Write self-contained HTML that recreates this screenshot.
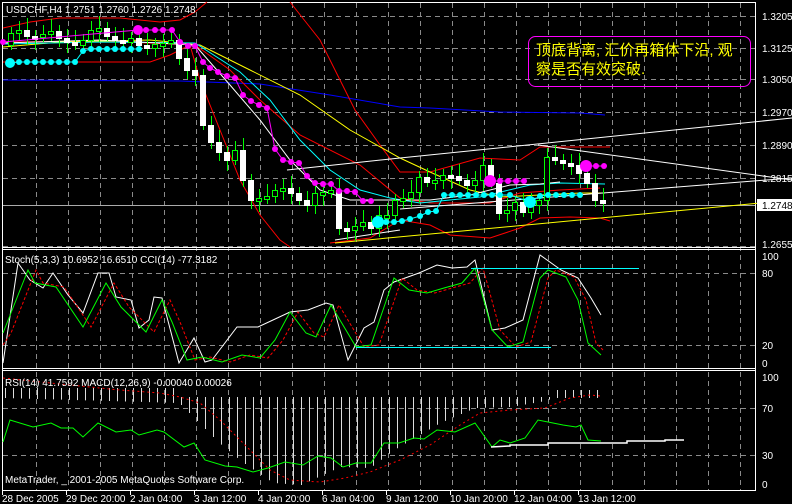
<!DOCTYPE html>
<html><head><meta charset="utf-8"><style>
html,body{margin:0;padding:0;background:#000;width:792px;height:504px;overflow:hidden}
svg{display:block}
text{font-family:"Liberation Sans","Noto Sans CJK SC",sans-serif;font-size:10px;fill:#fff}
</style></head><body>
<svg id="s" width="792" height="504" viewBox="0 0 792 504" xmlns="http://www.w3.org/2000/svg">
<g id="grid" stroke="#8a8a8a" stroke-dasharray="5,4" stroke-width="1"></g>
<g fill="none" stroke="#fff" stroke-width="1">
<line x1="2" y1="2.5" x2="756" y2="2.5"/>
<line x1="2.5" y1="2" x2="2.5" y2="491"/>
<line x1="755.5" y1="2" x2="755.5" y2="491"/>
<line x1="2" y1="247.5" x2="756" y2="247.5"/><line x1="2" y1="249.5" x2="756" y2="249.5"/>
<line x1="2" y1="368.5" x2="756" y2="368.5"/><line x1="2" y1="370.5" x2="756" y2="370.5"/>
<line x1="2" y1="490.5" x2="756" y2="490.5"/>
</g>
<line x1="3" y1="205.5" x2="755" y2="205.5" stroke="#aaa"/>
<g fill="none" stroke-width="1">
<polyline stroke="#0000ff" points="3,80 180,81 260,84 330,95 400,107 430,108 500,112 580,113 605,115"/>
<polyline stroke="#ff0000" points="3,28 30,22 60,18 120,18 160,22 180,20 195,12 207,2"/>
<polyline stroke="#ff0000" points="290,2 320,40 340,80 355,110 380,145 400,172 430,172 480,158 520,160 540,147 560,147 610,147"/>
<polyline stroke="#ff0000" points="3,62 50,62 100,62 150,62 170,55 190,45 200,80 220,130 240,180 260,215 280,240 290,247"/>
<polyline stroke="#ff0000" points="330,243 370,238 400,220 430,225 450,235 490,238 520,228 540,218 570,217 600,218 610,221"/>
<polyline stroke="#ff0000" points="3,42 100,41 195,45 230,70 260,100 300,135 360,165 400,198 430,203 460,203 490,203 520,193 560,190 600,188"/>
<polyline stroke="#ffff00" points="3,47 60,42 150,40 200,45 250,70 300,95 350,130 400,158 430,172 470,190 500,197 540,195 580,193 605,193"/>
<polyline stroke="#00ffff" points="3,44 100,42 195,43 240,72 270,100 300,140 330,170 360,190 390,198 420,203 450,200 480,197 530,185 560,183 605,184"/>
<polyline stroke="#ffffff" points="3,43 100,40 195,45 230,85 260,120 290,160 320,190 350,200 390,200 430,200 470,195 510,185 540,184 560,182"/>
<line stroke="#fff" x1="287" y1="170" x2="400" y2="158"/>
<line stroke="#fff" x1="400" y1="158" x2="792" y2="118"/>
<line stroke="#fff" x1="538" y1="145" x2="792" y2="180"/>
<line stroke="#fff" x1="335" y1="240" x2="400" y2="230"/>
<line stroke="#fff" x1="400" y1="209" x2="792" y2="178"/>
<line stroke="#ffff00" x1="335" y1="243" x2="792" y2="200"/>
</g>
<g id="candles"></g>
<g id="dots"></g>
<rect x="528.5" y="36.5" width="222" height="50" rx="7" fill="none" stroke="#ff00ff"/>
<text x="536" y="55" style="font-size:15px;fill:#ffff00">顶底背离, 汇价再箱体下沿, 观</text>
<text x="536" y="74" style="font-size:15px;fill:#ffff00">察是否有效突破.</text>
<text x="6" y="13">USDCHF,H4  1.2751 1.2760 1.2726 1.2748</text>
<g>
<text x="762" y="20">1.3205</text><text x="762" y="52">1.3125</text><text x="762" y="83">1.3050</text>
<text x="762" y="116">1.2970</text><text x="762" y="149">1.2890</text><text x="762" y="182">1.2815</text>
<text x="762" y="248">1.2655</text>
<rect x="757" y="199" width="35" height="12" fill="#fff"/>
<text x="762" y="209" style="fill:#000">1.2748</text>
<text x="762" y="260">100</text><text x="762" y="277">80</text><text x="762" y="349">20</text><text x="762" y="367">0</text>
<text x="762" y="381">100</text><text x="762" y="412">70</text><text x="762" y="459">30</text><text x="762" y="488">0</text>
</g>
<g fill="none">
<polyline stroke="#fff" points="3,363 18,263 30,280 43,288 53,273 68,295 83,313 98,273 109,273 116,297 131,300 139,328 149,320 154,297 162,298 179,363 194,338 205,362 212,360 237,327 258,327 273,320 290,312 308,310 326,303 333,305 348,360 364,328 374,322 384,290 394,282 419,273 437,265 452,268 467,267 475,260 492,330 505,328 523,320 540,255 561,270 578,278 591,298 601,315"/>
<polyline stroke="#ff0000" stroke-dasharray="3,2" points="3,345 11,333 36,270 43,283 64,287 91,327 114,283 129,307 154,332 170,300 180,322 195,360 210,357 230,362 250,355 268,358 283,340 298,312 314,333 324,337 339,305 364,347 379,345 402,278 417,290 435,293 452,288 470,283 483,268 500,330 516,347 531,342 548,278 556,270 574,277 586,300 596,343 603,350"/>
<polyline stroke="#00ff00" points="3,333 28,270 35,283 56,287 83,327 106,283 121,307 146,332 162,300 172,322 187,360 202,357 222,362 242,355 260,358 275,340 290,312 306,333 316,337 331,305 356,347 371,345 394,278 409,290 427,293 444,288 462,283 475,268 492,330 508,347 523,342 540,278 548,270 566,277 578,300 588,343 601,355"/>
<line stroke="#00ffff" x1="471" y1="268.5" x2="639" y2="268.5"/>
<line stroke="#00ffff" x1="356" y1="347.5" x2="551" y2="347.5"/>
</g>
<text x="5" y="263">Stoch(5,3,3) 10.6952 16.6510  CCI(14) -77.3182</text>
<g id="macd" stroke="#ddd"></g>
<g fill="none">
<polyline stroke="#ff0000" stroke-dasharray="2,3" points="3,378 60,384 120,390 160,393 180,397 200,403 220,420 245,445 270,470 290,480 320,482 345,478 370,472 400,460 430,445 460,425 480,413 510,410 545,408 570,398 590,395 600,396"/>
<polyline stroke="#00ff00" points="3,442 10,420 33,427 51,423 61,428 73,428 83,437 98,423 116,432 131,430 139,435 157,430 164,432 184,447 194,443 205,460 225,466 237,467 253,472 268,468 285,462 303,465 318,456 331,458 343,467 356,463 371,463 384,443 399,443 414,438 424,439 437,430 455,432 475,423 492,447 500,440 510,443 525,438 538,420 548,422 563,425 576,427 581,425 588,440 601,441"/>
<polyline stroke="#fff" stroke-width="1.5" points="491,447 510,446 510,445 548,445 548,443 627,443 627,441 665,441 665,440 684,440"/>
</g>
<text x="5" y="386">RSI(14) 41.7592  MACD(12,26,9) -0.00040 0.00026</text>
<text x="5" y="483">MetaTrader, _ 2001-2005 MetaQuotes Software Corp.</text>
<g id="time"></g>
</svg>
<script>
var NS="http://www.w3.org/2000/svg";
function el(p,t,a){var e=document.createElementNS(NS,t);for(var k in a)e.setAttribute(k,a[k]);p.appendChild(e);return e;}
var g=document.getElementById('grid');
for(var x=36;x<755;x+=32){el(g,'line',{x1:x+.5,y1:3,x2:x+.5,y2:490});}
[16.5,48.5,79.5,112.5,145.5,178.5,246.5,273.5,345.5,408.5,455.5].forEach(function(y){el(g,'line',{x1:3,y1:y,x2:755,y2:y});});
var closes=[33,30,36,37,34,31,38,42,45,40,30,28,36,40,42,38,45,48,44,43,40,58,70,75,125,142,152,160,150,180,200,198,196,190,188,193,200,205,193,192,190,228,230,226,222,228,215,215,200,198,192,177,182,180,175,176,180,185,180,165,183,213,210,202,212,205,200,157,160,163,165,173,183,200,203];
var cg=document.getElementById('candles');var prev=45;
closes.forEach(function(c,i){var x=11+8*i;var o=prev;var top=Math.min(o,c),bot=Math.max(o,c);if(bot-top<3){bot=top+3;}
var bear=c>o;el(cg,'line',{x1:x+.5,y1:top-6-(i%3)*3,x2:x+.5,y2:bot+5+(i%4)*2,stroke:'#00ff00'});
el(cg,'rect',{x:x-2.5,y:top+.5,width:5,height:bot-top,fill:bear?'#fff':'#000',stroke:bear?'#fff':'#00ff00'});prev=c;});
var dg=document.getElementById('dots');
function dot(x,y,r,c){el(dg,'circle',{cx:x,cy:y,r:r,fill:c});}
function chain(pts,c){el(dg,'polyline',{points:pts.map(function(p){return p.join(',')}).join(' '),fill:'none',stroke:c});pts.forEach(function(p){dot(p[0],p[1],3,c);});}
var m=[[3,42],[138,30],[146,30],[155,30],[163,30],[172,30],[180,42],[188,46],[195,46],[203,62],[210,68],[218,72],[227,76],[235,78],[243,95],[251,101],[259,105],[267,108],[275,149],[283,160],[291,162],[299,163],[307,176],[315,183],[323,184],[331,184],[339,191],[347,191],[355,192],[363,201],[371,201]];
chain(m,'#ff00ff');dot(138,30,5,'#ff00ff');
chain([[490,181],[500,181],[508,181],[516,181],[524,181]],'#ff00ff');dot(490,181,6,'#ff00ff');
chain([[586,166],[596,166],[604,166]],'#ff00ff');dot(586,166,6,'#ff00ff');
var cy=[[10,63]];for(var x=19;x<=75;x+=8)cy.push([x,62]);cy.push([83,51]);for(x=91;x<=139;x+=8)cy.push([x,49]);
chain(cy,'#00ffff');dot(10,63,5,'#00ffff');
var c2=[[378,222],[386,222],[394,222],[402,221],[410,219],[420,216],[428,212],[436,211],[444,195],[452,195],[460,195],[468,195],[476,195],[484,195],[492,195],[500,195],[510,195],[530,202],[540,196],[548,195],[556,195],[564,195],[572,195],[580,195]];
chain(c2,'#00ffff');dot(378,222,6,'#00ffff');dot(530,202,6,'#00ffff');
var mg=document.getElementById('macd');
function depth(x){var pts=[[3,398],[179,403],[219,443],[242,462],[273,483],[301,485],[340,467],[370,468],[394,450],[440,423],[475,408],[510,407],[540,402],[555,398],[600,398]];for(var i=1;i<pts.length;i++){if(x<=pts[i][0]){var a=pts[i-1],b=pts[i];return a[1]+(b[1]-a[1])*(x-a[0])/(b[0]-a[0]);}}return 398;}
for(var x=5;x<=600;x+=8){var t=x<180?388:(x>550?390:397);el(mg,'line',{x1:x+.5,y1:t,x2:x+.5,y2:depth(x)});}
var tg=document.getElementById('time');
[["28 Dec 2005",2],["29 Dec 20:00",66],["2 Jan 04:00",130],["3 Jan 12:00",194],["4 Jan 20:00",258],["6 Jan 04:00",322],["9 Jan 12:00",386],["10 Jan 20:00",450],["12 Jan 04:00",514],["13 Jan 12:00",578]].forEach(function(a){var t=el(tg,'text',{x:a[1],y:502});t.textContent=a[0];el(tg,'line',{x1:a[1]+.5,y1:491,x2:a[1]+.5,y2:495,stroke:'#fff'});});
</script>
</body></html>
